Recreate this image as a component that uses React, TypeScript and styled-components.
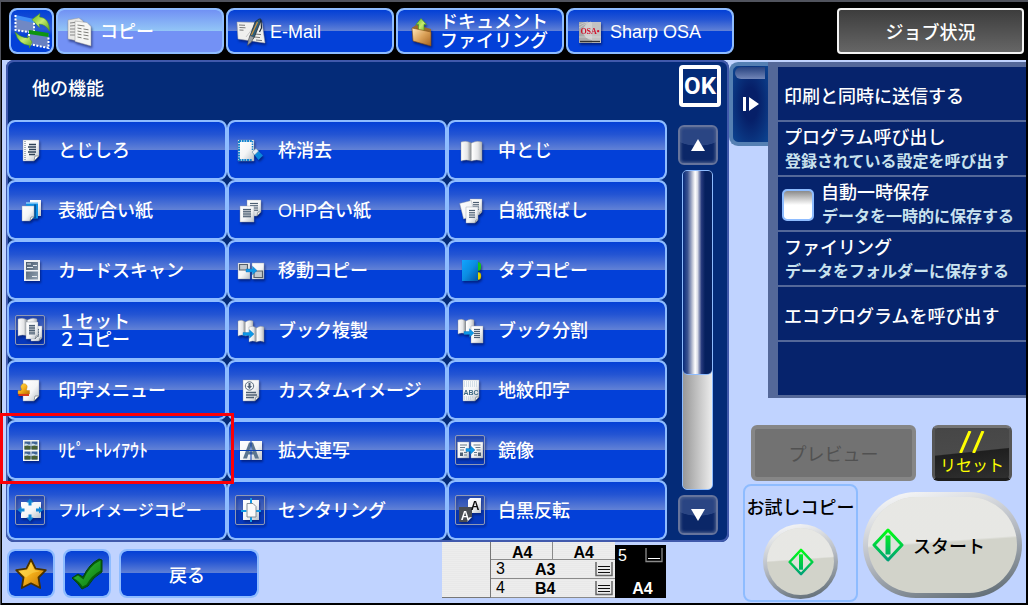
import React from 'react';
import styled, { createGlobalStyle, css } from 'styled-components';

const GlobalStyle = createGlobalStyle`
  *, *::before, *::after { box-sizing: border-box; }
  body { margin: 0; background: #000; }
  button, input { font: inherit; color: inherit; margin: 0; padding: 0; }
  body, button { font-family: "Liberation Sans", "Noto Sans CJK JP", sans-serif; font-size: 18px; font-weight: 500; }
  button { cursor: pointer; }
`;

const edge = '#8ebcff';
const blueGloss = 'linear-gradient(#0340d6 0%, #2354d3 22%, #6282d6 50%, #0340d8 50%, #0340d8 100%)';
const activeGloss = 'linear-gradient(#7191f4 0%, #93c6f6 50%, #7391f5 50%, #7391f5 100%)';

const Frame = styled.div`
  min-height: 100vh;
  border-top: 2px solid #50535d;
  border-left: 1px solid #50535d;
  display: flex;
`;

const Screen = styled.div`
  flex: 1;
  min-width: 0;
  display: flex;
  flex-direction: column;
  border: solid #000;
  border-width: 0 2px 2px 1px;
  background: #c0d3ff;
`;

/* ---------- Mode bar ---------- */

const ModeBar = styled.header`
  display: flex;
  align-items: center;
  gap: 2px;
  height: 58px;
  padding: 0 2px 0 7px;
  background: #000;
`;

const glossy = css`
  border: 2px solid ${edge};
  border-radius: 8px;
  background: ${blueGloss} padding-box, ${edge};
  color: #fff;
`;

const SwitchButton = styled.button`
  ${glossy}
  display: flex;
  align-items: center;
  justify-content: center;
  width: 45px;
  height: 46px;
  background: linear-gradient(#0340d6, #2c5bd2 45%, #0340d8 60%) padding-box, ${edge};
`;

const ModeTab = styled.button<{ $active?: boolean }>`
  ${glossy}
  display: flex;
  align-items: center;
  gap: 4px;
  flex: 0 1 168px;
  height: 46px;
  padding: 0 6px;
  line-height: 19px;
  text-align: left;
  white-space: pre-line;
  ${(p) => p.$active && css`background: ${activeGloss} padding-box, ${edge};`}
`;

const ButtonLabel = styled.span`
  padding-top: 2px;
`;

const JobStatus = styled.button`
  width: 187px;
  height: 46px;
  margin-left: auto;
  border: 2px solid #f4f4f4;
  border-radius: 4px;
  background: linear-gradient(#3d3d3d, #666);
  color: #fff;
`;

/* ---------- Layout ---------- */

const Body = styled.div`
  flex: 1;
  display: grid;
  grid-template-columns: minmax(0, 1fr) 297px;
`;

const MainColumn = styled.main`
  display: flex;
  flex-direction: column;
  padding-left: 4px;
`;

const Panel = styled.section`
  padding: 0 0 2px 1px;
  border-radius: 8px;
  background: #042b78;
  box-shadow: inset 0 0 0 2px #4059ac;
`;

const PanelHead = styled.div`
  display: flex;
  align-items: flex-start;
  justify-content: space-between;
  height: 60px;
  padding: 5px 8px 0 25px;
`;

const PanelTitle = styled.h1`
  margin: 12px 0 0;
  font-size: 18px;
  line-height: 24px;
  font-weight: 500;
  color: #fff;
`;

const OkButton = styled.button`
  width: 42px;
  height: 42px;
  border: 4px solid #fff;
  border-radius: 4px;
  background: #042b78;
  color: #fff;
  font-family: Roboto, sans-serif;
  font-size: 24px;
  font-weight: 700;
  line-height: 32px;
`;

const PanelBody = styled.div`
  display: flex;
`;

const FunctionGrid = styled.div`
  flex: 1;
  display: grid;
  grid-template-columns: repeat(3, minmax(0, 1fr));
  grid-auto-rows: 60px;
`;

const Cell = styled.div`
  position: relative;
  display: flex;
`;

const FunctionButton = styled.button<{ $small?: boolean }>`
  ${glossy}
  flex: 1;
  display: flex;
  align-items: center;
  gap: 12px;
  padding: 0 5px;
  font-size: ${(p) => (p.$small ? 16 : 18)}px;
  line-height: 18px;
  text-align: left;
  white-space: pre-line;
`;

const Highlight = styled.span`
  position: absolute;
  inset: -7px -7px -4px -7px;
  border: 3px solid #fb0007;
  pointer-events: none;
  z-index: 1;
`;

const IconSlot = styled.svg`
  flex: none;
  width: 32px;
  height: 32px;
  overflow: visible;
  filter: drop-shadow(1px 2px 1px rgba(0, 10, 70, 0.55));
`;

/* ---------- Scroll column ---------- */

const ScrollColumn = styled.div`
  display: flex;
  flex-direction: column;
  gap: 5px;
  width: 62px;
  padding: 5px 11px;
`;

const ArrowButton = styled.button`
  display: flex;
  align-items: center;
  justify-content: center;
  height: 40px;
  border: 2px solid #66749c;
  border-radius: 6px;
  background: radial-gradient(ellipse 28px 15px at 50% 4px, #2a4583 0 96%, transparent 100%), #0b2768;
  box-shadow: inset 0 0 3px 1px #4d608f;
`;

const Track = styled.div`
  flex: 1;
  margin: 0 5px 0 4px;
  border: 1px solid ${edge};
  border-radius: 5px;
  overflow: hidden;
  background: linear-gradient(90deg, #989898, #ececec);
`;

const Thumb = styled.div`
  height: 64%;
  border-bottom: 1px solid ${edge};
  border-radius: 0 0 5px 5px;
  background: linear-gradient(90deg, #06297a 0, #3c5390 16%, #c9cddb 34%, #fff 42%, #d8dbe6 50%, #26397c 64%, #06205e 76%, #06205e 100%);
`;

/* ---------- Bottom bar ---------- */

const BottomBar = styled.footer`
  display: flex;
  align-items: flex-start;
  gap: 8px;
  padding: 0 63px 5px 1px;
`;

const BarButton = styled.button<{ $wide?: boolean }>`
  ${glossy}
  display: flex;
  align-items: center;
  justify-content: center;
  width: ${(p) => (p.$wide ? 140 : 48)}px;
  height: 49px;
  margin-top: 7px;
  padding-right: ${(p) => (p.$wide ? 4 : 0)}px;
`;

const Trays = styled.div`
  display: flex;
  width: 224px;
  height: 56px;
  margin-left: auto;
  font-size: 16px;
  color: #000;
`;

const TrayBlank = styled.div`
  width: 48px;
  border-bottom: 1px solid #777;
  background: repeating-linear-gradient(#ededed 0 1px, #e9e9e9 1px 2px);
`;

const TrayStack = styled.div`
  flex: 1;
  display: grid;
  grid-template-rows: 18px 19px 19px;
  border-left: 1px solid #777;
  background: repeating-linear-gradient(#ededed 0 1px, #e9e9e9 1px 2px);
`;

const TrayRow = styled.div`
  display: flex;
  align-items: center;
  padding-right: 2px;
  border-bottom: 1px solid #8a8a8a;
  line-height: 18px;
`;

const TrayHalf = styled.b`
  flex: 1;
  height: 18px;
  padding: 2px 0 0 2px;
  text-align: center;
  & + & { border-left: 1px solid #8a8a8a; }
`;

const TrayNumber = styled.span`
  width: 24px;
  padding-left: 5px;
`;

const TraySize = styled.b`
  flex: 1;
  padding: 2px 0 0 20px;
`;

const LevelMark = styled.svg`
  flex: none;
  width: 18px;
  height: 16px;
`;

const ManualTray = styled.div`
  display: flex;
  flex-direction: column;
  justify-content: space-between;
  width: 51px;
  height: 53px;
  margin-top: 3px;
  padding: 2px 3px 0;
  background: #000;
  color: #fff;
  line-height: 18px;
`;

const ManualTop = styled.div`
  display: flex;
  justify-content: space-between;
`;

const ManualSize = styled.b`
  text-align: center;
  padding-left: 4px;
`;

/* ---------- Right column ---------- */

const SideColumn = styled.aside`
  display: flex;
  flex-direction: column;
  padding-top: 2px;
`;

const Drawer = styled.div`
  display: flex;
  align-items: flex-start;
`;

const DrawerTab = styled.button`
  position: relative;
  display: flex;
  align-items: center;
  justify-content: center;
  width: 39px;
  height: 84px;
  border: 4px solid #5580b3;
  border-right: 0;
  border-radius: 9px 0 0 9px;
  background: radial-gradient(ellipse at center, #061f68 30%, #0d4592 100%);
`;

const TabShine = styled.span`
  position: absolute;
  top: 1px;
  left: 2px;
  right: 3px;
  height: 12px;
  border-radius: 6px 0 0 6px;
  background: linear-gradient(#27427f, #7286b8);
`;

const ActionList = styled.div`
  flex: 1;
  min-width: 0;
  border: solid #546899;
  border-width: 5px 0 1px 10px;
  background: #06236c;
  color: #fff;
`;

const actionRow = css`
  display: flex;
  align-items: center;
  width: 100%;
  height: 55px;
  border: 0;
  border-bottom: 2px solid #546899;
  background: none;
  color: #fff;
  text-align: left;
  white-space: nowrap;
`;

const ActionButton = styled.button`
  ${actionRow}
  padding: 2px 0 0 6px;
`;

const ActionToggle = styled.label`
  ${actionRow}
  gap: 7px;
  padding: 2px 0 0 4px;
`;

const ActionBlank = styled.div`
  ${actionRow}
`;

const ActionText = styled.span`
  display: flex;
  flex-direction: column;
  line-height: 23px;
`;

const ActionNote = styled.span`
  padding-left: 1px;
  font-size: 16px;
  font-weight: 700;
  color: #c9e2ee;
`;

const Checkbox = styled.input`
  appearance: none;
  flex: none;
  width: 32px;
  height: 32px;
  border: 2px solid ${edge};
  border-radius: 5px;
  background: linear-gradient(#8a8a8a, #fff 50%) padding-box, ${edge};
`;

const KeyRow = styled.div`
  display: flex;
  gap: 16px;
  margin-top: 27px;
  padding-left: 22px;
`;

const PreviewKey = styled.button`
  width: 165px;
  height: 56px;
  border: 4px solid #868686;
  border-radius: 6px;
  background: #727272;
  color: #515151;
  font-weight: 400;
  cursor: default;
`;

const ResetKey = styled.button`
  display: flex;
  flex-direction: column;
  align-items: center;
  gap: 1px;
  width: 80px;
  height: 56px;
  padding-top: 3px;
  border: 3px solid;
  border-color: #747474 #555 #1d1d1d #555;
  border-radius: 6px;
  background: linear-gradient(174deg, #464646, #4a4a4a 47%, #1f1f1f 49%, #2f2f2f);
  color: #ff0;
  font-size: 16px;
  font-weight: 400;
  line-height: 24px;
  white-space: nowrap;
`;

const StartRow = styled.div`
  display: flex;
  align-items: flex-start;
  gap: 5px;
  margin-top: 3px;
  padding-left: 14px;
`;

const SampleBox = styled.div`
  display: flex;
  flex-direction: column;
  align-items: center;
  width: 115px;
  height: 118px;
  padding-top: 10px;
  border: 2px solid ${edge};
  border-radius: 8px;
  color: #000;
  line-height: 24px;
  white-space: nowrap;
`;

const roundKey = css`
  display: flex;
  align-items: center;
  border: solid transparent;
  background:
    linear-gradient(176deg, rgba(240, 240, 239, 0.7) 46%, transparent 48%) padding-box,
    linear-gradient(#d2d3ca, #d2d3ca) padding-box,
    linear-gradient(165deg, #fff, #b5bac2 50%, #55626b) border-box;
  color: #000;
`;

const SampleKey = styled.button`
  ${roundKey}
  justify-content: center;
  width: 75px;
  height: 75px;
  margin-top: 4px;
  border-width: 4px;
  border-radius: 50%;
`;

const StartKey = styled.button`
  ${roundKey}
  gap: 9px;
  width: 159px;
  height: 106px;
  margin-top: 8px;
  padding-left: 4px;
  border-width: 5px;
  border-radius: 53px;
`;

/* ---------- Drawing pieces ---------- */

function Gradients() {
  return (
    <svg width="0" height="0" style={{ position: 'absolute' }} aria-hidden="true">
      <defs>
        <linearGradient id="paper" x1="0" y1="0" x2="1" y2="1">
          <stop offset="0" stopColor="#fff" />
          <stop offset="0.55" stopColor="#f4f5f6" />
          <stop offset="1" stopColor="#b9c0c6" />
        </linearGradient>
        <linearGradient id="steel" x1="0" y1="0" x2="1" y2="1">
          <stop offset="0" stopColor="#47596d" />
          <stop offset="1" stopColor="#92a2b1" />
        </linearGradient>
        <linearGradient id="sky" x1="0" y1="0" x2="1" y2="1">
          <stop offset="0" stopColor="#12a4ff" />
          <stop offset="0.5" stopColor="#0b8ce2" />
          <stop offset="1" stopColor="#0454a4" />
        </linearGradient>
        <linearGradient id="leaf" x1="0" y1="0" x2="1" y2="1">
          <stop offset="0" stopColor="#5fb51a" />
          <stop offset="0.5" stopColor="#c6ea6e" />
          <stop offset="1" stopColor="#5aa51c" />
        </linearGradient>
        <linearGradient id="gold" x1="0" y1="0" x2="1" y2="1">
          <stop offset="0" stopColor="#ffe25a" />
          <stop offset="0.5" stopColor="#f5b01a" />
          <stop offset="1" stopColor="#b96a00" />
        </linearGradient>
        <linearGradient id="folder" x1="0" y1="0" x2="1" y2="1">
          <stop offset="0" stopColor="#ffe9bd" />
          <stop offset="0.5" stopColor="#dca35a" />
          <stop offset="1" stopColor="#a4611d" />
        </linearGradient>
        <linearGradient id="tick" x1="0" y1="0" x2="1" y2="1">
          <stop offset="0" stopColor="#3cc238" />
          <stop offset="1" stopColor="#067a10" />
        </linearGradient>
        <linearGradient id="go" gradientUnits="userSpaceOnUse" x1="0" y1="2" x2="0" y2="32">
          <stop offset="0" stopColor="#00ff12" />
          <stop offset="1" stopColor="#00a077" />
        </linearGradient>
        <linearGradient id="spine" x1="0" y1="0" x2="1" y2="0">
          <stop offset="0" stopColor="#fff" />
          <stop offset="0.3" stopColor="#e4e5e7" />
          <stop offset="0.47" stopColor="#8e9296" />
          <stop offset="0.53" stopColor="#fff" />
          <stop offset="0.8" stopColor="#e6e7e9" />
          <stop offset="1" stopColor="#b4b7ba" />
        </linearGradient>
      </defs>
    </svg>
  );
}

type Box = { x: number; y: number; w: number; h: number };

function Sheet({ x, y, w, h, lines = 0, fold = 4, ink = '#4d5f73' }: Box & { lines?: number; fold?: number; ink?: string }) {
  const step = (h - 7) / Math.max(lines, 1);
  return (
    <g>
      <path d={`M${x} ${y}h${w}v${h - fold}l${-fold} ${fold}h${fold - w}z`} fill="url(#paper)" />
      <path d={`M${x} ${y}h${w}v${h - fold}l${-fold} ${fold}h${fold - w}z`} fill="none" stroke="#8f9aa6" strokeWidth="0.4" />
      {fold > 0 && <path d={`M${x + w} ${y + h - fold}h${-fold + 1}l-1 ${fold}z`} fill="#fff" stroke="#5c6670" strokeWidth="0.6" />}
      {Array.from({ length: lines }, (_, i) => (
        <path key={i} d={`M${x + 3} ${y + 3.5 + i * step}h${w - 6}`} stroke={ink} strokeWidth="1.2" />
      ))}
    </g>
  );
}

function Book({ x, y, w, h }: Box) {
  const m = x + w / 2;
  return (
    <path
      d={`M${x} ${y + 1}Q${x + w / 4} ${y - 1} ${m} ${y + 2}Q${x + (w * 3) / 4} ${y - 1} ${x + w} ${y + 1}V${y + h}Q${x + (w * 3) / 4} ${y + h - 2} ${m} ${y + h}Q${x + w / 4} ${y + h - 2} ${x} ${y + h}z`}
      fill="url(#spine)"
      stroke="#888d93"
      strokeWidth="0.4"
    />
  );
}

function ArrowRight({ x, y, w = 10 }: { x: number; y: number; w?: number }) {
  return <path d={`M${x} ${y - 1.5}h${w - 4.5}v-2.7l4.5 4.2l-4.5 4.2v-2.7h${4.5 - w}z`} fill="#0d97e8" stroke="#0a6fb8" strokeWidth="0.4" />;
}

function IconFrame() {
  return <rect x="1.5" y="1.5" width="29" height="29" rx="1.5" fill="rgba(20,50,130,0.18)" stroke="#8f98b5" strokeWidth="1" />;
}

const icons: Record<string, React.ReactNode> = {
  margin: (
    <>
      <Sheet x={9} y={6} w={16} h={21} fold={5} />
      <path d="M11 7v19" stroke="#59697a" strokeWidth="1" strokeDasharray="1 1" />
      <path d="M15 10.500h7M14 13h8M15 15.500h7M14 18h8M15 20.500h6" stroke="#2c4055" strokeWidth="1.400" />
    </>
  ),
  covers: (
    <>
      <path d="M16 6h11v16h-11z" fill="url(#paper)" />
      <path d="M12 8.500h12v16h-12z" fill="#0c8fe6" />
      <path d="M12 8.500h12v1h-12z" fill="#cfeaff" />
      <path d="M20 10.500h2v14h-2z" fill="#05589f" />
      <Sheet x={8} y={12} w={12} h={15} />
    </>
  ),
  card: (
    <>
      <path d="M10 6h16v21h-16z" fill="#eef0f2" />
      <path d="M12 8h12v8h-12zM12 17.500h12v8h-12z" fill="url(#steel)" />
      <path d="M13 10h4M19 11.500h4M13 13.500h6M18 22.500h5" stroke="#e4eaef" strokeWidth="1" />
    </>
  ),
  twoSets: (
    <>
      <IconFrame />
      <Book x={4} y={4} w={19} h={18} />
      <Sheet x={17} y={12} w={11} h={15} lines={5} fold={3} />
      <Sheet x={12} y={8} w={12} h={17} lines={6} fold={3} />
    </>
  ),
  erase: (
    <>
      <Sheet x={4} y={6} w={16} h={21} fold={0} />
      <path d="M5 7h13.500M5 7v19h13" fill="none" stroke="#1484cf" strokeWidth="2" strokeDasharray="2 0.700" />
      <path d="M18.500 7v9" fill="none" stroke="#1484cf" strokeWidth="1.500" strokeDasharray="1.500 1" />
      <path d="M18 18l4-3.500l7 7l-4.500 4.500z" fill="#0b88da" />
      <path d="M18 18l4-3.500l2.500 2.500l-4 4z" fill="#e8eef4" stroke="#7f8b97" strokeWidth="0.500" />
    </>
  ),
  ohp: (
    <>
      <Sheet x={13} y={6} w={14} h={16} lines={4} />
      <Sheet x={6} y={12} w={14} h={16} lines={5} fold={0} />
    </>
  ),
  move: (
    <>
      <Sheet x={4} y={9} w={12} h={16} fold={0} />
      <Sheet x={18} y={9} w={12} h={16} fold={0} />
      <path d="M5.500 10.500h8v5.500h-8zM20 17h8.500v6.500h-8.500z" fill="#c3c9ce" stroke="#56606a" strokeWidth="1.200" />
      <ArrowRight x={12} y={16.5} w={11} />
    </>
  ),
  bookCopy: (
    <>
      <Book x={4} y={6} w={15} h={16} />
      <Book x={15} y={12} w={15} h={16} />
      <ArrowRight x={9} y={20} w={11} />
    </>
  ),
  centerFold: <Book x={7} y={7} w={21} h={20} />,
  skipBlank: (
    <>
      <Sheet x={16} y={5} w={12} h={16} lines={4} fold={3} />
      <g transform="rotate(-14 12 14)"><Sheet x={7} y={8} w={12} h={16} fold={0} /></g>
      <Sheet x={12} y={13} w={12} h={16} lines={4} fold={3} />
    </>
  ),
  tabCopy: (
    <>
      <path d="M23 8q4 0 4 3v3q0 3-4 3z" fill="#15c21b" />
      <path d="M23 18q4 0 4 3v2q0 3-4 3z" fill="#e2d600" stroke="#8a8400" strokeWidth="0.400" />
      <path d="M8 6h16v21h-16z" fill="url(#sky)" />
    </>
  ),
  bookSplit: (
    <>
      <Book x={4} y={5} w={16} h={15} />
      <Sheet x={17} y={12} w={12} h={17} lines={5} fold={0} />
      <ArrowRight x={10} y={19} w={10} />
    </>
  ),
  stamp: (
    <>
      <Sheet x={9} y={6} w={16} h={21} fold={5} />
      <path d="M7 14a3.200 3.200 0 1 1 6 0q-1 1.500 0 2.500h2.500v3.500h-11.500v-3.500h3q1-1 0-2.500z" fill="url(#gold)" stroke="#c98200" strokeWidth="0.400" />
      <path d="M4.500 20h10.500v2h-10.500z" fill="#d8381a" />
    </>
  ),
  repeat: (
    <>
      <path d="M9 6h16v21h-16z" fill="#f5f6f2" />
      {[[10.5, 7.5], [17.5, 7.5], [10.5, 17.5], [17.5, 17.5]].map(([x, y]) => (
        <g key={`${x}-${y}`}>
          <path d={`M${x} ${y}h6v8h-6z`} fill="#3f6496" />
          <path d={`M${x} ${y + 2.5}q1.500-1 3 0t3 0v2h-6z`} fill="#cfe0ee" />
          <path d={`M${x} ${y + 4.5}q3-1 6 0v3.500h-6z`} fill="#465f35" />
        </g>
      ))}
    </>
  ),
  fullImage: (
    <>
      <IconFrame />
      <path d="M7 8h20v16h-20z" fill="url(#paper)" />
      <path d="M16 4.500l3.500 4h-2v3h-3v-3h-2zM16 27.500l-3.500-4h2v-3h3v3h2zM3.500 16l4-3.500v2h3v3h-3v2zM29 16l-4 3.500v-2h-3v-3h3v-2z" fill="#1187d6" />
    </>
  ),
  custom: (
    <>
      <Sheet x={9} y={6} w={16} h={21} />
      <circle cx="15.500" cy="12" r="4.200" fill="#eef1f4" stroke="#5d6e80" strokeWidth="1" />
      <path d="M14.500 9h2v3h1.500l-2.500 3l-2.500-3h1.500z" fill="#4d5f73" />
      <path d="M12 18.500h10M12 21h11M12 23.500h8" stroke="#4d5f73" strokeWidth="1.300" />
    </>
  ),
  enlarge: (
    <>
      <path d="M6 7h22v19h-22z" fill="url(#paper)" />
      <path d="M15 8.500h4l6 16h-4l-1.300-4h-5.400l-1.300 4h-4zM15.200 17.500h3.600l-1.800-5.500z" fill="#5b7590" />
      <path d="M6 16.500h22M17 7v19" stroke="#073cb4" strokeWidth="1" />
    </>
  ),
  centering: (
    <>
      <IconFrame />
      <path d="M9 6h16v20h-16z" fill="url(#paper)" />
      <path d="M17 4v6M17 22v6M7 17h5.500M21.500 17h5.500" stroke="#129be6" strokeWidth="2" />
      <path d="M13 9.500h6l3 3v10.500h-9z" fill="#fafafa" stroke="#77838e" strokeWidth="0.900" />
    </>
  ),
  pattern: (
    <>
      <Sheet x={9} y={6} w={16} h={21} />
      <path d="M10 8h14M10 10h14M10 12h14M10 23h10M10 25h8" stroke="#b3c7d6" strokeWidth="1" strokeDasharray="1 1" />
      <text x="17" y="21" textAnchor="middle" fontFamily="Liberation Sans, sans-serif" fontSize="7" fontWeight="700" fill="#3f6a84">ABC</text>
    </>
  ),
  mirror: (
    <>
      <IconFrame />
      <Sheet x={3.5} y={8} w={11.5} h={16} fold={0} />
      <Sheet x={17} y={8} w={12} h={16} fold={0} />
      <path d="M6 11h7M6 13.500h5M6 16h4M19.500 11h7M21.500 13.500h5M22.500 16h4" stroke="#6a7a88" strokeWidth="1.200" />
      <path d="M6 18.500h3v3.500h-3zM24 18.500h3v3.500h-3z" fill="#4d5f73" />
      <path d="M10 18.500h3M10 21h3M20 18.500h3M20 21h3" stroke="#6a7a88" />
      <ArrowRight x={12} y={16} w={9} />
    </>
  ),
  invert: (
    <>
      <IconFrame />
      <path d="M16 4h11v15h-13v-13z" fill="url(#paper)" />
      <path d="M5 13h13v10l-5 5h-8z" fill="#4a4d52" />
      <path d="M18 23l-3 .5l-2 4.500z" fill="#fff" />
      <text x="21" y="15.500" textAnchor="middle" fontFamily="Liberation Sans, sans-serif" fontSize="12" fontWeight="700" fill="#101010">A</text>
      <text x="11" y="25.500" textAnchor="middle" fontFamily="Liberation Sans, sans-serif" fontSize="12" fontWeight="700" fill="#fff">A</text>
    </>
  ),
  copyMode: (
    <>
      <path d="M4 5l11-2l4 3v21l-15-3z" fill="#e9e9e7" stroke="#999" strokeWidth="0.500" />
      <path d="M6 8l8-1M6 11l6-.5M6 14l5 0M6 17h5M6 20h5" stroke="#888" strokeWidth="1" />
      <path d="M11 6l12 1.500l4 4v19.500l-16-4.500z" fill="#f6f6f4" stroke="#999" strokeWidth="0.500" />
      <path d="M13.500 10l7 1M13.500 13l4 .8M19.500 14l5 .8M13.500 16l4 .8M19.500 17l5 .8M13.500 19l4 .8M19.500 20l5 .8M13.500 22l4 .8M19.500 23.500l5 .8" stroke="#7e7e7a" strokeWidth="1" />
    </>
  ),
  mail: (
    <>
      <path d="M3 7l25 .5l3 20.500l-27-4z" fill="#f0f0ee" stroke="#a5a5a5" strokeWidth="0.500" />
      <path d="M5 10l6 .3M5.500 12.500l6 .3M5.500 15l4 .2M21 19l6 .6M21 22l5 .6M22 25l6 .6" stroke="#777" strokeWidth="1" />
      <path d="M12 22l7-9" stroke="#aaa" strokeWidth="0.600" />
      <path d="M21 7l4-3h2l-1 4l-6 15l-4 3l0-5z" fill="#2f5d78" stroke="#15222e" strokeWidth="0.700" />
      <path d="M16 20.500l4 1.700l-2.500 4.800l-4 3.500l.8-5.500z" fill="#9a9fa3" stroke="#444" strokeWidth="0.500" />
      <path d="M23.500 7l-6 13" stroke="#d0953a" strokeWidth="1.200" />
      <path d="M27 5l.5 8l-2 4" stroke="#1d2a36" strokeWidth="1.200" fill="none" />
    </>
  ),
  filing: (
    <>
      <path d="M8 13l4-3l15 4v4l-18-3z" fill="#9a6a2c" />
      <path d="M17 3.500l5.500 6h-2.500v8h-5.500v-8h-2.500z" fill="url(#leaf)" stroke="#4c9a14" strokeWidth="0.600" />
      <path d="M8 13l19 4v14l-18-5z" fill="url(#folder)" stroke="#7e4c16" strokeWidth="0.600" />
    </>
  ),
  osa: (
    <>
      <path d="M5 7h22v21h-22z" fill="#a9a9a9" />
      <circle cx="18" cy="16" r="9" fill="#d0d0d0" />
      <path d="M18 7h9v21h-9z" fill="#c2c2c2" />
      <path d="M5 10q6-3 9-3M5 13q6-5 12-6M5 22h22" stroke="#ddd" strokeWidth="0.600" fill="none" />
      <text x="16" y="18.500" textAnchor="middle" fontFamily="Liberation Serif, serif" fontSize="8" fontWeight="700" fill="#d3122c">OSA•</text>
      <path d="M6 26.500h20" stroke="#333" strokeWidth="1.300" />
    </>
  ),
};

function Icon({ name }: { name: string }) {
  return <IconSlot viewBox="0 0 32 32" aria-hidden="true">{icons[name]}</IconSlot>;
}

function SwitchIcon() {
  return (
    <svg width="38" height="38" viewBox="0 0 38 38" aria-hidden="true">
      <path d="M2.500 4l18.500 4v13l-18.500-3z" fill="#7088c4" />
      <path d="M2.500 3l18.500 4v4l-18.500-4z" fill="#3f8df5" />
      <path d="M2.500 3v15l18.500 3v-13" fill="none" stroke="#fff" strokeWidth="2" strokeDasharray="2 1.500" />
      <path d="M16 19l19.500 3v14l-19.500-4z" fill="#6780c2" />
      <path d="M16 18l19.500 3v4l-19.500-3z" fill="#0d9410" />
      <path d="M16 22v10l19.500 4v-12" fill="none" stroke="#fff" strokeWidth="2" strokeDasharray="2 1.500" />
      <path d="M19 7.500l8-6l-.5 3.500q10 1 10 14q-4-7-10.500-7l.5 3.500z" fill="url(#leaf)" stroke="#4c9a14" strokeWidth="0.500" />
      <path d="M19 30l-2.500 6v-2.500q-11-1-14.500-13.500q6 6 13 6l-.5-3z" fill="url(#leaf)" stroke="#4c9a14" strokeWidth="0.500" />
    </svg>
  );
}

function StarIcon() {
  return (
    <svg width="34" height="34" viewBox="0 0 34 34" aria-hidden="true">
      <path d="M17 2.500l4.600 9.200l10.200 1.500l-7.300 7.300l1.700 10.500l-9.200-4.700l-9.200 4.700l1.700-10.500l-7.300-7.300l10.200-1.500z" fill="url(#gold)" stroke="#4a3200" strokeWidth="1.800" strokeLinejoin="round" />
      <path d="M17 5.500l3 7.500l6 1.500q-8 0-14 6l-6-6l8-1.500z" fill="#ffe566" opacity="0.400" />
    </svg>
  );
}

function TickIcon() {
  return (
    <svg width="36" height="34" viewBox="0 0 36 34" aria-hidden="true">
      <path d="M3 21l6-4l5 3q6-13 16-18l3 1v12q-9 5-14 14l-6 3q-4-6-10-11z" fill="#075c0b" stroke="#04460a" strokeWidth="1" strokeLinejoin="round" />
      <path d="M4.500 21l4.500-2.500l5.500 4q6-14 17-19v10q-9 5-14 14l-4 2q-3-5-9-8.500z" fill="url(#tick)" />
    </svg>
  );
}

function StartMark({ size }: { size: number }) {
  return (
    <svg width={size} height={size + 2} viewBox="0 0 32 34" aria-hidden="true">
      <path d="M16 2l14 15l-14 15l-14-15z" fill="#dfe3dc" stroke="url(#go)" strokeWidth="3" strokeLinejoin="round" />
      <path d="M13.500 7.500h5v19h-5z" fill="url(#go)" />
    </svg>
  );
}

function PaperLevel() {
  return (
    <LevelMark viewBox="0 0 18 16" aria-hidden="true">
      <path d="M1 1v13.500h16v-13.500" fill="none" stroke="#666" strokeWidth="1.500" />
      <path d="M3 5.500h12M3 8.500h12M3 11.500h12" stroke="#111" strokeWidth="1" />
    </LevelMark>
  );
}

function EmptyLevel() {
  return (
    <LevelMark viewBox="0 0 18 16" aria-hidden="true">
      <path d="M1 1v13.500h16v-13.500" fill="none" stroke="#8a8a8a" strokeWidth="1.300" />
      <path d="M3 11.500h12" stroke="#fff" strokeWidth="1" />
    </LevelMark>
  );
}

/* ---------- Content ---------- */

const modes = [
  { label: 'コピー', icon: 'copyMode', active: true },
  { label: 'E-Mail', icon: 'mail' },
  { label: 'ドキュメント\nファイリング', icon: 'filing' },
  { label: 'Sharp OSA', icon: 'osa' },
];

const functions: { label: string; icon: string; small?: boolean; marked?: boolean }[] = [
  { label: 'とじしろ', icon: 'margin' },
  { label: '枠消去', icon: 'erase' },
  { label: '中とじ', icon: 'centerFold' },
  { label: '表紙/合い紙', icon: 'covers' },
  { label: 'OHP合い紙', icon: 'ohp' },
  { label: '白紙飛ばし', icon: 'skipBlank' },
  { label: 'カードスキャン', icon: 'card' },
  { label: '移動コピー', icon: 'move' },
  { label: 'タブコピー', icon: 'tabCopy' },
  { label: '１セット\n２コピー', icon: 'twoSets' },
  { label: 'ブック複製', icon: 'bookCopy' },
  { label: 'ブック分割', icon: 'bookSplit' },
  { label: '印字メニュー', icon: 'stamp' },
  { label: 'カスタムイメージ', icon: 'custom' },
  { label: '地紋印字', icon: 'pattern' },
  { label: 'ﾘﾋﾟｰﾄﾚｲｱｳﾄ', icon: 'repeat', marked: true },
  { label: '拡大連写', icon: 'enlarge' },
  { label: '鏡像', icon: 'mirror' },
  { label: 'フルイメージコピー', icon: 'fullImage', small: true },
  { label: 'センタリング', icon: 'centering' },
  { label: '白黒反転', icon: 'invert' },
];

export default function App() {
  return (
    <Frame>
      <GlobalStyle />
      <Gradients />
      <Screen>
        <ModeBar>
          <SwitchButton aria-label="画面切替"><SwitchIcon /></SwitchButton>
          {modes.map((m) => (
            <ModeTab key={m.label} $active={m.active}>
              <Icon name={m.icon} />
              <ButtonLabel>{m.label}</ButtonLabel>
            </ModeTab>
          ))}
          <JobStatus>ジョブ状況</JobStatus>
        </ModeBar>
        <Body>
          <MainColumn>
            <Panel>
              <PanelHead>
                <PanelTitle>他の機能</PanelTitle>
                <OkButton>OK</OkButton>
              </PanelHead>
              <PanelBody>
                <FunctionGrid>
                  {functions.map((f) => (
                    <Cell key={f.label}>
                      <FunctionButton $small={f.small}>
                        <Icon name={f.icon} />
                        <ButtonLabel>{f.label}</ButtonLabel>
                      </FunctionButton>
                      {f.marked && <Highlight />}
                    </Cell>
                  ))}
                </FunctionGrid>
                <ScrollColumn>
                  <ArrowButton aria-label="上へ">
                    <svg width="16" height="14" viewBox="0 0 16 14"><path d="M8 1l7 12h-14z" fill="#fff" /></svg>
                  </ArrowButton>
                  <Track><Thumb /></Track>
                  <ArrowButton aria-label="下へ">
                    <svg width="16" height="14" viewBox="0 0 16 14"><path d="M8 13l7-12h-14z" fill="#fff" /></svg>
                  </ArrowButton>
                </ScrollColumn>
              </PanelBody>
            </Panel>
            <BottomBar>
              <BarButton aria-label="お気に入り"><StarIcon /></BarButton>
              <BarButton aria-label="設定確認"><TickIcon /></BarButton>
              <BarButton $wide>戻る</BarButton>
              <Trays>
                <TrayBlank />
                <TrayStack>
                  <TrayRow>
                    <TrayHalf>A4</TrayHalf>
                    <TrayHalf>A4</TrayHalf>
                  </TrayRow>
                  <TrayRow>
                    <TrayNumber>3</TrayNumber>
                    <TraySize>A3</TraySize>
                    <PaperLevel />
                  </TrayRow>
                  <TrayRow>
                    <TrayNumber>4</TrayNumber>
                    <TraySize>B4</TraySize>
                    <PaperLevel />
                  </TrayRow>
                </TrayStack>
                <ManualTray>
                  <ManualTop>
                    <span>5</span>
                    <EmptyLevel />
                  </ManualTop>
                  <ManualSize>A4</ManualSize>
                </ManualTray>
              </Trays>
            </BottomBar>
          </MainColumn>
          <SideColumn>
            <Drawer>
              <DrawerTab aria-label="閉じる">
                <TabShine />
                <svg width="16" height="14" viewBox="0 0 16 14"><path d="M0 0h3v14h-3zM6 0l10 7l-10 7z" fill="#fff" /></svg>
              </DrawerTab>
              <ActionList>
                <ActionButton>印刷と同時に送信する</ActionButton>
                <ActionButton>
                  <ActionText>
                    プログラム呼び出し
                    <ActionNote>登録されている設定を呼び出す</ActionNote>
                  </ActionText>
                </ActionButton>
                <ActionToggle>
                  <Checkbox type="checkbox" />
                  <ActionText>
                    自動一時保存
                    <ActionNote>データを一時的に保存する</ActionNote>
                  </ActionText>
                </ActionToggle>
                <ActionButton>
                  <ActionText>
                    ファイリング
                    <ActionNote>データをフォルダーに保存する</ActionNote>
                  </ActionText>
                </ActionButton>
                <ActionButton>エコプログラムを呼び出す</ActionButton>
                <ActionBlank />
              </ActionList>
            </Drawer>
            <KeyRow>
              <PreviewKey disabled>プレビュー</PreviewKey>
              <ResetKey>
                <svg width="26" height="22" viewBox="0 0 26 22" aria-hidden="true">
                  <path d="M1.500 22l9.500-22M14.500 22l9.500-22" stroke="#ff0" strokeWidth="3" />
                </svg>
                リセット
              </ResetKey>
            </KeyRow>
            <StartRow>
              <SampleBox>
                <span id="sample-label">お試しコピー</span>
                <SampleKey aria-labelledby="sample-label"><StartMark size={26} /></SampleKey>
              </SampleBox>
              <StartKey>
                <StartMark size={32} />
                スタート
              </StartKey>
            </StartRow>
          </SideColumn>
        </Body>
      </Screen>
    </Frame>
  );
}
